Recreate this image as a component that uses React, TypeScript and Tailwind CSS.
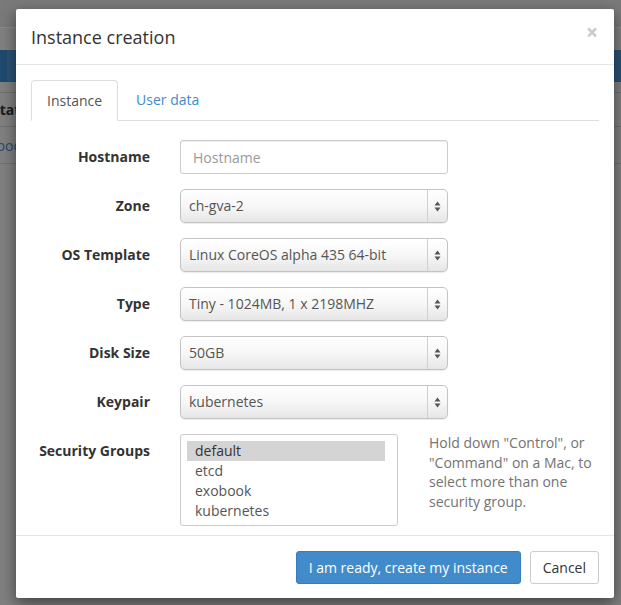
import React from "react";

const font = { fontFamily: '"Open Sans", "Liberation Sans", sans-serif' };

function Select({ value }: { value: string }) {
  return (
    <div className="relative h-[34px] w-[268px] rounded-[5px] border border-[#c3c3c3] bg-gradient-to-b from-[#ffffff] via-[#f7f7f7] to-[#e6e6e6] shadow-[inset_0_1px_0_#fff,0_1px_1px_rgba(0,0,0,0.08)] flex items-center">
      <span className="pl-[8px] text-[14px] text-[#555] leading-[20px] flex-1">{value}</span>
      <div className="h-full w-[20px] border-l border-[#d0d0d0] flex items-center justify-center">
        <svg width="7" height="11" viewBox="0 0 7 11">
          <path d="M3.5 0.5 L6.5 4.5 L0.5 4.5 Z" fill="#555" />
          <path d="M3.5 10.5 L6.5 6.5 L0.5 6.5 Z" fill="#555" />
        </svg>
      </div>
    </div>
  );
}

function Row({ label, children }: { label: string; children: React.ReactNode }) {
  return (
    <div className="flex items-center h-[34px]">
      <div className="w-[119px] mr-[30px] text-right font-bold text-[14px] text-[#333] leading-[20px]">{label}</div>
      {children}
    </div>
  );
}

export default function App() {
  return (
    <div className="relative w-[621px] h-[605px] overflow-hidden bg-[#808080]" style={font}>
      {/* page behind overlay */}
      <div className="flex flex-col">
        <div className="h-[28px] bg-[#7a7a7a] border-b border-[#8a8a8a]" />
        <div className="h-[22px]" />
        <div className="h-[32px] flex">
          <div className="w-[7px] bg-[#1e4a70]" />
          <div className="flex-1 bg-[#2a5275]" />
        </div>
        <div className="h-[11px] border-b border-[#6f6f6f]" />
        <div className="h-[34px] flex items-center border-b border-[#6f6f6f]">
          <span className="font-bold text-[14px] text-[#1a1a1a] -ml-[8px]">Status</span>
        </div>
        <div className="h-[37px] flex items-center border-b border-[#727272]">
          <span className="text-[14px] text-[#254a6e] -ml-[27px]">Exobook</span>
        </div>
      </div>

      {/* modal */}
      <div className="absolute left-[16px] top-[9px] w-[598px] h-[589px] bg-white rounded-[2px] shadow-[0_5px_15px_rgba(0,0,0,0.5)] flex flex-col">
        <div className="h-[56px] border-b border-[#e5e5e5] flex items-center justify-between px-[15px]">
          <h4 className="text-[18px] text-[#333] leading-[26px]">Instance creation</h4>
          <span className="text-[21px] font-bold text-[#c8c8c8] leading-none -mt-[9px] mr-[1px]">×</span>
        </div>
        <div className="flex-1 px-[15px] pt-[15px]">
          <div className="flex border-b border-[#ddd] h-[41px]">
            <div className="h-[41px] px-[15px] border border-[#ddd] border-b-white rounded-t-[4px] bg-white text-[14px] text-[#555] leading-[20px] pt-[10px]">Instance</div>
            <div className="h-[40px] px-[18px] text-[14px] text-[#428bca] leading-[20px] pt-[10px]">User data</div>
          </div>
          <div className="mt-[19px] flex flex-col gap-[15px]">
            <Row label="Hostname">
              <div className="h-[34px] w-[268px] border border-[#ccc] rounded-[3px] shadow-[inset_0_1px_1px_rgba(0,0,0,0.075)] flex items-center pl-[12px] text-[14px] text-[#999]">Hostname</div>
            </Row>
            <Row label="Zone"><Select value="ch-gva-2" /></Row>
            <Row label="OS Template"><Select value="Linux CoreOS alpha 435 64-bit" /></Row>
            <Row label="Type"><Select value="Tiny - 1024MB, 1 x 2198MHZ" /></Row>
            <Row label="Disk Size"><Select value="50GB" /></Row>
            <Row label="Keypair"><Select value="kubernetes" /></Row>
            <div className="flex items-start">
              <div className="w-[119px] mr-[30px] text-right font-bold text-[14px] text-[#333] leading-[20px] pt-[7px]">Security Groups</div>
              <div className="h-[92px] w-[218px] border border-[#ccc] rounded-[3px] pt-[6px] pl-[6px] pr-[12px] text-[14px] text-[#555] leading-[20px]">
                <div className="bg-[#d4d4d4] pl-[8px] text-[#333]">default</div>
                <div className="pl-[8px]">etcd</div>
                <div className="pl-[8px]">exobook</div>
                <div className="pl-[8px]">kubernetes</div>
              </div>
              <div className="ml-[31px] w-[170px] -mt-[1px] text-[14px] leading-[19.5px] text-[#737373]">
                Hold down "Control", or "Command" on a Mac, to select more than one security group.
              </div>
            </div>
          </div>
        </div>
        <div className="h-[63px] border-t border-[#e5e5e5] flex items-start justify-end gap-[9px] px-[15px] pt-[15px]">
          <button className="h-[33px] px-[12px] rounded-[3px] bg-[#428bca] border border-[#357ebd] text-white text-[14px] leading-[20px]">I am ready, create my instance</button>
          <button className="h-[33px] px-[12px] rounded-[3px] bg-white border border-[#ccc] text-[#333] text-[14px] leading-[20px]">Cancel</button>
        </div>
      </div>
    </div>
  );
}
